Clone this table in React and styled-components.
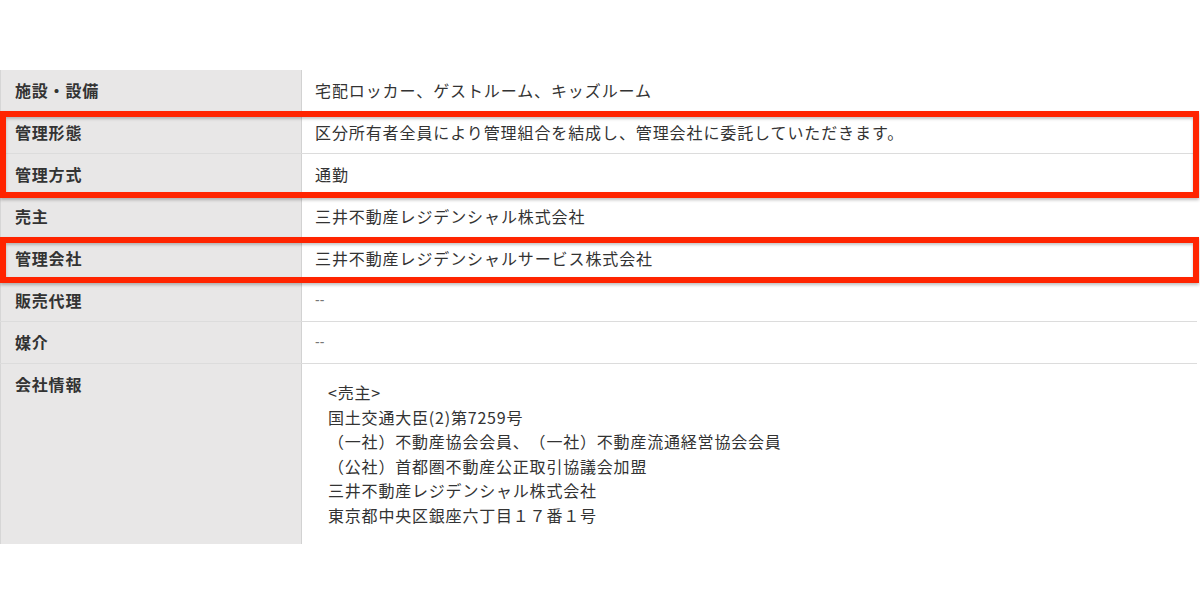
import React from 'react';
import styled, { createGlobalStyle } from 'styled-components';

const GlobalStyle = createGlobalStyle`
    body {
        margin: 0;
        background: white;
        font-family: "Noto Sans CJK JP", "Liberation Sans", sans-serif;
        color: #333;
        text-spacing-trim: space-all;
    }
`

const RootDiv = styled.div`
    width: 1200px;
    height: 600px;
    padding: 70px 3px 0px 0px;
    box-sizing: border-box;
`

const Table = styled.div`
    width: 100%;
    display: flex;
    flex-direction: column;
`

const Highlight = styled.div`
    position: relative;
    display: flex;
    flex-direction: column;

    &::after {
        content: '';
        position: absolute;
        top: -1px;
        left: 0px;
        right: -2px;
        bottom: ${props => props.$bottom || -2}px;
        border: 6px solid #ff2400;
        box-shadow: 0 2px 3px rgba(0, 0, 0, 0.25), inset 0 2px 3px rgba(0, 0, 0, 0.22);
        pointer-events: none;
    }
`

const Row = styled.div`
    display: grid;
    grid-template-columns: 302px 1fr;
    border-bottom: ${props => props.$last ? 'none' : '1px solid #dcdcdc'};
    height: ${props => props.$tall ? '180px' : '41px'};
`

const Label = styled.div`
    background: #e8e7e7;
    border-left: 1px solid #d6d6d6;
    border-right: 1px solid #d2d2d2;
    padding: 10px 14px;
    font-size: 16px;
    letter-spacing: 0.8px;
    line-height: 21px;
    font-weight: 700;
    color: #333;
`

const Value = styled.div`
    padding: 10px 13px;
    font-size: 16px;
    letter-spacing: 0.9px;
    line-height: 21px;
    color: #333;
`

const Dash = styled.span`
    display: inline-block;
    vertical-align: top;
    font-family: "Liberation Sans", sans-serif;
    color: #777;
    font-size: 14px;
    line-height: 21px;
    letter-spacing: 0px;
`

const Info = styled.div`
    padding: 16px 26px 0px;
    display: flex;
    flex-direction: column;
    font-size: 16px;
    letter-spacing: 0.8px;
    line-height: 24.5px;
    color: #333;
`

const InfoLine = styled.div`
    white-space: nowrap;
`

const companyInfo = [
    '<売主>',
    '国土交通大臣(2)第7259号',
    '（一社）不動産協会会員、（一社）不動産流通経営協会会員',
    '（公社）首都圏不動産公正取引協議会加盟',
    '三井不動産レジデンシャル株式会社',
    '東京都中央区銀座六丁目１７番１号',
]

function App() {
    return (
        <RootDiv>
            <GlobalStyle />
            <Table>
                <Row>
                    <Label>施設・設備</Label>
                    <Value>宅配ロッカー、ゲストルーム、キッズルーム</Value>
                </Row>
                <Highlight>
                    <Row>
                        <Label>管理形態</Label>
                        <Value>区分所有者全員により管理組合を結成し、管理会社に委託していただきます。</Value>
                    </Row>
                    <Row>
                        <Label>管理方式</Label>
                        <Value>通勤</Value>
                    </Row>
                </Highlight>
                <Row>
                    <Label>売主</Label>
                    <Value>三井不動産レジデンシャル株式会社</Value>
                </Row>
                <Highlight $bottom={-3}>
                    <Row>
                        <Label>管理会社</Label>
                        <Value>三井不動産レジデンシャルサービス株式会社</Value>
                    </Row>
                </Highlight>
                <Row>
                    <Label>販売代理</Label>
                    <Value><Dash>--</Dash></Value>
                </Row>
                <Row>
                    <Label>媒介</Label>
                    <Value><Dash>--</Dash></Value>
                </Row>
                <Row $tall $last>
                    <Label>会社情報</Label>
                    <Info>
                        {companyInfo.map((line, i) => (
                            <InfoLine key={i}>{line}</InfoLine>
                        ))}
                    </Info>
                </Row>
            </Table>
        </RootDiv>
    )
}

export default App;
